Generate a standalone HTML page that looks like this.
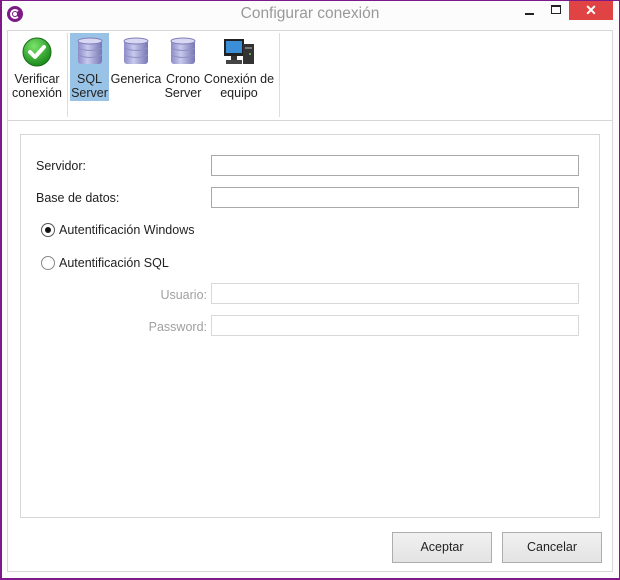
<!DOCTYPE html>
<html><head><meta charset="utf-8"><style>
*{margin:0;padding:0;box-sizing:border-box}
body{width:620px;height:580px;overflow:hidden;background:#fff;font-family:"Liberation Sans",sans-serif;font-size:12px;color:#222;position:relative}
.a{position:absolute}
.win{left:0;top:0;width:620px;height:580px;border:1px solid #7d1a87;border-left-width:2px;border-bottom-width:2px;background:#fcfcfc}
.t{font-size:12.5px;line-height:14px;text-align:center;color:#222}
.inp{background:#fff;border:1px solid #a9a9a9;height:21px}
.dis{border-color:#d8d8d8}
.btn{border:1px solid #adadad;background:linear-gradient(#f1f1f1,#e3e3e3);height:31px;text-align:center;line-height:29px;font-size:12.5px}
.lbl{font-size:12.5px}
</style></head><body>
<div class="a win"></div>
<div class="a" style="left:7px;top:6px;width:16px;height:16px;border-radius:50%;background:#7d1a87"></div>
<div class="a" style="left:10px;top:9px;width:10px;height:10px;border-radius:50%;border:2px solid #fff;border-right-color:transparent"></div>
<div class="a" style="left:13px;top:12px;width:4px;height:4px;border-radius:50%;background:#fff"></div>
<div class="a" style="left:0;top:5px;width:620px;text-align:center;font-size:15.5px;color:#999">Configurar conexión</div>
<div class="a" style="left:525px;top:13px;width:9px;height:2px;background:#222"></div>
<div class="a" style="left:551px;top:5px;width:10px;height:9px;border:1px solid #222;border-top-width:2px"></div>
<div class="a" style="left:569px;top:1px;width:44px;height:19px;background:#e04343;color:#fff;font-size:14px;text-align:center;line-height:19px;font-weight:bold">✕</div>
<div class="a" style="left:7px;top:30px;width:606px;height:542px;border:1px solid #d6d6d6;background:#fff"></div>
<div class="a" style="left:8px;top:120px;width:604px;height:1px;background:#d6d6d6"></div>
<div class="a" style="left:67px;top:33px;width:1px;height:84px;background:#ddd"></div>
<div class="a" style="left:279px;top:33px;width:1px;height:84px;background:#ddd"></div>
<svg class="a" style="left:22px;top:37px" width="30" height="30" viewBox="0 0 30 30"><defs><radialGradient id="g" cx="40%" cy="30%" r="70%"><stop offset="0" stop-color="#7be36b"/><stop offset="1" stop-color="#1a8a1a"/></radialGradient></defs><circle cx="15" cy="15" r="14" fill="url(#g)" stroke="#1a6e1a"/><path d="M8 15l5 5 9-10" fill="none" stroke="#fff" stroke-width="4" stroke-linecap="round" stroke-linejoin="round"/></svg>
<div class="a t" style="left:9px;top:72px;width:56px">Verificar<br>conexión</div>
<div class="a" style="left:70px;top:33px;width:39px;height:68px;background:#99c3e6"></div>
<svg width="0" height="0" style="position:absolute"><defs><linearGradient id="db" x1="0" x2="1"><stop offset="0" stop-color="#8c8cc8"/><stop offset=".4" stop-color="#c9c9ee"/><stop offset="1" stop-color="#7676b4"/></linearGradient></defs></svg>
<svg class="a" style="left:77px;top:37px" width="26" height="30"><rect x="1" y="3" width="24" height="24" rx="3" fill="url(#db)"/><ellipse cx="13" cy="4" rx="12" ry="3" fill="#d8d8f4" stroke="#8080b8"/><path d="M1 11q12 5 24 0M1 18q12 5 24 0" stroke="#9090c4" fill="none"/></svg>
<div class="a t" style="left:70px;top:72px;width:39px">SQL<br>Server</div>
<svg class="a" style="left:123px;top:37px" width="26" height="30"><rect x="1" y="3" width="24" height="24" rx="3" fill="url(#db)"/><ellipse cx="13" cy="4" rx="12" ry="3" fill="#d8d8f4" stroke="#8080b8"/><path d="M1 11q12 5 24 0M1 18q12 5 24 0" stroke="#9090c4" fill="none"/></svg>
<div class="a t" style="left:110px;top:72px;width:52px">Generica</div>
<svg class="a" style="left:170px;top:37px" width="26" height="30"><rect x="1" y="3" width="24" height="24" rx="3" fill="url(#db)"/><ellipse cx="13" cy="4" rx="12" ry="3" fill="#d8d8f4" stroke="#8080b8"/><path d="M1 11q12 5 24 0M1 18q12 5 24 0" stroke="#9090c4" fill="none"/></svg>
<div class="a t" style="left:160px;top:72px;width:46px">Crono<br>Server</div>
<svg class="a" style="left:223px;top:38px" width="32" height="28"><rect x="1" y="1" width="20" height="17" fill="#222"/><rect x="3" y="3" width="16" height="12" fill="#3a8fd8"/><rect x="8" y="18" width="6" height="4" fill="#333"/><rect x="3" y="22" width="16" height="4" fill="#444"/><rect x="20" y="6" width="11" height="20" fill="#333"/><rect x="22" y="9" width="7" height="2" fill="#777"/><circle cx="27" cy="16" r="1" fill="#6c6"/></svg>
<div class="a t" style="left:202px;top:72px;width:74px">Conexión de<br>equipo</div>
<div class="a" style="left:20px;top:134px;width:580px;height:384px;border:1px solid #d6d6d6"></div>
<div class="a lbl" style="left:36px;top:159px">Servidor:</div>
<div class="a inp" style="left:211px;top:155px;width:368px"></div>
<div class="a lbl" style="left:36px;top:191px">Base de datos:</div>
<div class="a inp" style="left:211px;top:187px;width:368px"></div>
<div class="a" style="left:41px;top:223px;width:14px;height:14px;border-radius:50%;border:1px solid #555;background:#fff"></div>
<div class="a" style="left:45px;top:227px;width:6px;height:6px;border-radius:50%;background:#111"></div>
<div class="a lbl" style="left:59px;top:223px">Autentificación Windows</div>
<div class="a" style="left:41px;top:256px;width:14px;height:14px;border-radius:50%;border:1px solid #888;background:#fff"></div>
<div class="a lbl" style="left:59px;top:256px">Autentificación SQL</div>
<div class="a lbl" style="left:140px;top:288px;width:67px;text-align:right;color:#a0a0a0">Usuario:</div>
<div class="a inp dis" style="left:211px;top:283px;width:368px"></div>
<div class="a lbl" style="left:130px;top:320px;width:77px;text-align:right;color:#a0a0a0">Password:</div>
<div class="a inp dis" style="left:211px;top:315px;width:368px"></div>
<div class="a btn" style="left:392px;top:532px;width:100px">Aceptar</div>
<div class="a btn" style="left:502px;top:532px;width:100px">Cancelar</div>
</body></html>
